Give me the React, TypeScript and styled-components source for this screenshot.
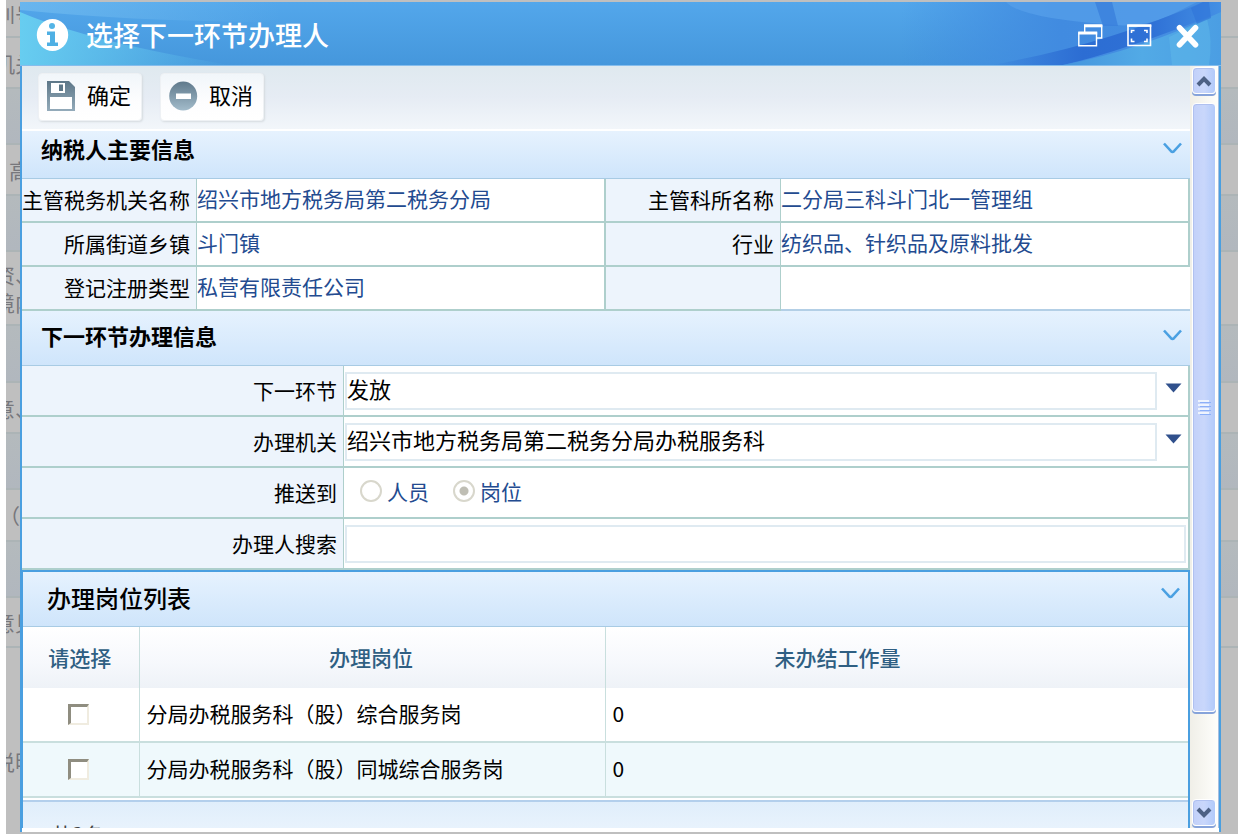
import React from "react";
import styled, { createGlobalStyle, css } from "styled-components";

const GlobalStyle = createGlobalStyle`
  *, *::before, *::after { box-sizing: border-box; }
  body {
    margin: 0;
    background: #fff;
    color: #000;
    font-family: "Noto Sans CJK SC", sans-serif;
    font-size: 21px;
    line-height: 28px;
  }
  button, input, select { font: inherit; color: inherit; margin: 0; }
`;

const line = "#aecfcc";
const headFill = "linear-gradient(#e6f2fe, #cfe5fb)";

/* ---------- page behind the dialog ---------- */

const Page = styled.div`
  display: grid;
  height: 100vh;
  padding: 0 0 6px 6px;
  overflow: hidden;
  > * { grid-area: 1 / 1; min-height: 0; min-width: 0; }
`;

const Backdrop = styled.div`
  display: flex;
  flex-direction: column;
  background: #bfbfbf;
  overflow: hidden;
`;

const BackRow = styled.div<{ $h: number; $tint?: boolean; $first?: boolean; $last?: boolean }>`
  flex: ${(p) => (p.$last ? "1 0 auto" : "none")};
  height: ${(p) => p.$h}px;
  padding: ${(p) => (p.$last ? "40px 0 0" : p.$first ? "0 0 12px" : "0")};
  border-bottom: ${(p) => (p.$last ? "none" : "2px solid #acb4b6")};
  background: ${(p) => (p.$tint ? "linear-gradient(#b4babd, #b1b7be)" : "#bfbfbf")};
  display: flex;
  flex-direction: column;
  justify-content: center;
`;

const BackLabel = styled.span<{ $w?: number }>`
  width: ${(p) => p.$w ?? 30}px;
  display: flex;
  justify-content: flex-end;
  overflow: hidden;
  white-space: nowrap;
  color: #77777c;
`;

/* ---------- dialog ---------- */

const Dialog = styled.section`
  position: relative;
  display: flex;
  flex-direction: column;
  margin: 2px 17px 2px 14px;
  border: solid #4a9fe0;
  border-width: 0 2px;
  background: #fff;
  padding-bottom: 4px;
`;

const TitleBar = styled.header`
  position: relative;
  flex: none;
  display: flex;
  align-items: center;
  height: 64px;
  margin: 0 -2px;
  padding: 4px 22px 0 16px;
  border-bottom: 1px solid #86bdec;
  background: linear-gradient(#53a7eb, #4597dc);
  color: #fff;
  overflow: hidden;
`;

const Swoosh = styled.svg<{ $right?: boolean }>`
  position: absolute;
  top: 0;
  ${(p) => (p.$right ? "right: 0;" : "left: 0;")}
`;

const TitleIcon = styled.svg`
  position: relative;
  flex: none;
`;

const Title = styled.h1`
  position: relative;
  flex: 1;
  margin: 0 0 0 17px;
  padding-bottom: 2px;
  font-size: 27px;
  line-height: 36px;
  font-weight: 500;
`;

const WindowButtons = styled.div`
  position: relative;
  display: flex;
  gap: 24px;
`;

const IconButton = styled.button`
  display: flex;
  padding: 0;
  border: 0;
  background: none;
  cursor: pointer;
`;

const Body = styled.div`
  flex: 1;
  min-height: 0;
  display: flex;
`;

const Content = styled.div`
  flex: 1;
  min-width: 0;
  overflow: hidden;
`;

const Toolbar = styled.div`
  display: flex;
  gap: 18px;
  height: 65px;
  padding: 7px 16px 9px;
  border-bottom: 2px solid #fff;
  background: linear-gradient(#dfe9ef, #e6ecf4 50%, #f2f6fa);
`;

const ToolButton = styled.button`
  display: flex;
  align-items: center;
  gap: 11px;
  height: 48px;
  padding: 0 10px 2px 8px;
  border: 1px solid #eef1f4;
  border-radius: 4px;
  background: linear-gradient(#f1f6fa, #fdfdfe 60%, #fff);
  box-shadow: 1px 1px 2px #d6dbdf;
  font-size: 22px;
  line-height: 28px;
  white-space: nowrap;
  cursor: pointer;
`;

const ButtonText = styled.span`
  padding-bottom: 4px;
`;

const SectionHead = styled.div<{ $first?: boolean; $panel?: boolean }>`
  display: flex;
  align-items: center;
  justify-content: space-between;
  height: ${(p) => (p.$first ? 48 : 55)}px;
  padding: ${(p) => (p.$panel ? "0 8px 2px 24px" : p.$first ? "0 8px 14px 19px" : "0 8px 6px 19px")};
  border-bottom: 1px solid #a8cbe4;
  background: ${headFill};
  ${(p) => p.$panel && css`svg { margin-bottom: 10px; }`}
`;

const SectionTitle = styled.h2<{ $panel?: boolean }>`
  margin: 0;
  font-size: ${(p) => (p.$panel ? 24 : 22)}px;
  line-height: 32px;
  font-weight: ${(p) => (p.$panel ? 500 : 700)};
`;

const FieldTable = styled.table`
  width: 100%;
  table-layout: fixed;
  border-spacing: 0;
`;

const Label = styled.th<{ $h: number }>`
  height: ${(p) => p.$h}px;
  padding: 0 6px 2px 0;
  border: solid ${line};
  border-width: 0 1px 2px 0;
  background: #edf4fc;
  font-weight: 400;
  text-align: right;
  white-space: nowrap;
`;

const Value = styled.td<{ $open?: boolean }>`
  padding: 0 0 5px;
  border: solid ${line};
  border-width: ${(p) => (p.$open ? "0 0 2px" : "0 2px 2px 0")};
  ${(p) => p.$open && "border-color: #b3cfe6;"}
  background: #fff;
  color: #234b90;
  white-space: nowrap;
`;

const Control = styled.td`
  padding: 0 2px 0 1px;
  border: solid ${line};
  border-width: 0 2px 2px 0;
  background: #fff;
`;

const Picker = styled.div`
  display: flex;
  align-items: center;
  gap: 8px;
  padding-right: 4px;
  svg { flex: none; margin-bottom: 6px; }
`;

const fieldBox = css`
  height: 38px;
  border: 2px solid #dfeaf1;
  border-radius: 0;
  background: #fff;
  color: #000;
  font-size: 22px;
  line-height: 28px;
  outline: none;
`;

const Select = styled.select`
  ${fieldBox}
  flex: 1;
  min-width: 0;
  padding: 0 0 7px;
  appearance: none;
`;

const TextInput = styled.input`
  ${fieldBox}
  display: block;
  width: 100%;
  padding: 0 2px;
`;

const Radios = styled.div`
  display: flex;
  gap: 24px;
  padding: 0 0 4px 15px;
`;

const RadioLabel = styled.label`
  display: flex;
  align-items: center;
  gap: 5px;
  color: #234b90;
`;

const Radio = styled.input`
  appearance: none;
  width: 22px;
  height: 22px;
  border: 2px solid #d8d7cc;
  border-radius: 50%;
  background: #fff;
  &:checked { background: radial-gradient(circle, #bfbeb4 0 4px, #fff 5px); }
`;

const Panel = styled.div`
  border: solid #4a9fe0;
  border-width: 2px 2px 0 1px;
`;

const Grid = styled.table`
  width: 100%;
  table-layout: fixed;
  border-spacing: 0;
  margin-bottom: 2px;
`;

const HeadCell = styled.th`
  height: 61px;
  padding: 0 2px 2px 0;
  border-right: 1px solid #c9dfde;
  background: linear-gradient(#fff, #f6f8fc 60%, #eef2f7);
  color: #2f5f83;
  font-weight: 500;
  &:nth-last-child(-n + 2) { border-right: 0; }
`;

const Row = styled.tr`
  &:nth-child(even) { background: #eff9fc; }
`;

const Cell = styled.td<{ $center?: boolean }>`
  height: 55px;
  padding: ${(p) => (p.$center ? "0 4px 0 0" : "0 7px 3px")};
  border: solid #c9dfde;
  border-width: 0 1px 2px 0;
  text-align: ${(p) => (p.$center ? "center" : "left")};
  white-space: nowrap;
  &:nth-last-child(-n + 2) { border-right: 0; }
`;

const CheckBox = styled.input`
  appearance: none;
  display: block;
  width: 21px;
  height: 21px;
  margin: 0 auto;
  border: solid;
  border-width: 3px 2px 2px 3px;
  border-color: #8f8d80 #f0ece0 #f0ece0 #8f8d80;
  background: #fff;
`;

const Pager = styled.div`
  height: 60px;
  padding: 18px 0 0 28px;
  border-top: 2px solid #b3cfec;
  background: linear-gradient(#e0eefb, #f2f8fe);
  color: #444;
`;

/* ---------- scroll bar ---------- */

const ScrollTrack = styled.div`
  flex: none;
  display: flex;
  flex-direction: column;
  width: 29px;
  padding: 1px 2px 0;
  border-right: 1px solid #a7bfe0;
  background: linear-gradient(90deg, #f0efe8, #fefefb);
`;

const scrollPart = css`
  border: 1px solid #fff;
  border-radius: 4px;
  background: linear-gradient(90deg, #c2d0f9, #c9d7fb 50%, #b2cafa);
  box-shadow: inset 1px 1px 0 #b0c1f0, 0 2px 0 #86a3da;
`;

const ScrollButton = styled.button`
  ${scrollPart}
  flex: none;
  display: flex;
  align-items: center;
  justify-content: center;
  height: 27px;
  margin-bottom: 2px;
  padding: 0;
`;

const Thumb = styled.div`
  ${scrollPart}
  flex: 609;
  margin-top: 7px;
  display: flex;
  align-items: center;
  justify-content: center;
`;

const ScrollGap = styled.div`
  flex: 87;
`;

/* ---------- icons ---------- */

const Chevron = () => (
  <svg width="19" height="12" viewBox="0 0 19 12" fill="none" stroke="#4aa0e2" strokeWidth="2.6" aria-hidden="true">
    <path d="M1 1.5 8 9.2Q9.500 10.600 11 9.200L18 1.500" />
  </svg>
);

const Triangle = () => (
  <svg width="17" height="10" viewBox="0 0 17 10" aria-hidden="true">
    <path d="M.5 .5H16.500L8.500 9.500Z" fill="#30508c" />
  </svg>
);

const ScrollArrow = ({ down }: { down?: boolean }) => (
  <svg width="16" height="12" viewBox="0 0 16 12" fill="none" stroke="#4d6185" strokeWidth="4" aria-hidden="true">
    <path d={down ? "M2 2 8 8.200 14 2" : "M2 10 8 3.800 14 10"} />
  </svg>
);

const InfoIcon = () => (
  <TitleIcon width="33" height="34" viewBox="0 0 33 34" aria-hidden="true">
    <ellipse cx="16.5" cy="16" rx="15.700" ry="16" fill="#fff" />
    <circle cx="16" cy="7" r="3" fill="#53b4e6" />
    <path d="M11 12.500H19V23.500H22V27H11V23.500H14V16H11Z" fill="#4fb0e4" />
  </TitleIcon>
);

const SaveIcon = () => (
  <svg width="29" height="30" viewBox="0 0 29 30" aria-hidden="true">
    <defs>
      <linearGradient id="disk" x1="0" y1="0" x2="0" y2="1">
        <stop offset="0" stopColor="#5d7788" />
        <stop offset="1" stopColor="#94abba" />
      </linearGradient>
    </defs>
    <path d="M0 0H22L28 6V30H0Z" fill="url(#disk)" />
    <path d="M4 2H18V12H4Z" fill="#fff" />
    <path d="M12 3.500H16V10H12Z" fill="#5d7788" />
    <path d="M3 16H25V28H3Z" fill="#fff" />
  </svg>
);

const MinusIcon = () => (
  <svg width="29" height="30" viewBox="0 0 29 30" aria-hidden="true">
    <defs>
      <linearGradient id="disc" x1="0" y1="0" x2="0" y2="1">
        <stop offset="0" stopColor="#5f798b" />
        <stop offset="1" stopColor="#a3bccb" />
      </linearGradient>
    </defs>
    <ellipse cx="14.200" cy="15" rx="14" ry="14.600" fill="url(#disc)" />
    <path d="M7 12.500H22V18H7Z" fill="#fff" />
  </svg>
);

const RestoreIcon = () => (
  <svg width="25" height="23" viewBox="0 0 25 23" fill="none" stroke="#fff" aria-hidden="true">
    <path d="M6.700 8V1.500H23.700V14H18.500" strokeWidth="1.400" />
    <path d="M6 1.800H24.300" strokeWidth="3" />
    <path d="M.8 9H18.500V21.700H.8Z" strokeWidth="1.400" />
    <path d="M.2 9H19.200" strokeWidth="3" />
  </svg>
);

const MaximizeIcon = () => (
  <svg width="25" height="23" viewBox="0 0 25 23" fill="none" stroke="#fff" aria-hidden="true">
    <path d="M1 1.500H23.500V21.500H1Z" strokeWidth="1.600" />
    <path d="M.2 1.600H24.300" strokeWidth="2.600" />
    <path d="M4.500 9V6.500H7.500M17 6.500H20V9M20 14.500V17.500H17M7.500 17.500H4.500V14.500" strokeWidth="1.600" />
  </svg>
);

const CloseIcon = () => (
  <svg width="23" height="24" viewBox="0 0 23 24" fill="none" stroke="#fff" strokeWidth="5.600" aria-hidden="true">
    <path d="M3.500 3.800 19.500 20.700M19.500 3.800 3.500 20.700" strokeLinecap="round" />
  </svg>
);

const Grip = () => (
  <svg width="13" height="15" viewBox="0 0 13 15" aria-hidden="true">
    {[0, 4, 8, 12].map((y) => (
      <g key={y}>
        <rect x="0" y={y} width="11" height="2" fill="#eef4fe" />
        <rect x="2" y={y + 2} width="11" height="1" fill="#8cb0f8" />
      </g>
    ))}
  </svg>
);

const LeftSwoosh = () => (
  <Swoosh width="260" height="63" viewBox="0 0 260 63" aria-hidden="true">
    <defs>
      <linearGradient id="glow" x1="0" y1="0" x2="1" y2="0">
        <stop offset="0" stopColor="#67cdf0" />
        <stop offset="1" stopColor="#67cdf0" stopOpacity="0" />
      </linearGradient>
      <linearGradient id="sheen" x1="0" y1="0" x2="1" y2="0">
        <stop offset="0" stopColor="#72bcf0" />
        <stop offset="1" stopColor="#72bcf0" stopOpacity="0" />
      </linearGradient>
    </defs>
    <path d="M0 0H260V20Q120 20 0 8Z" fill="url(#sheen)" opacity=".7" />
    <path d="M0 10Q70 40 210 63H0Z" fill="url(#glow)" />
  </Swoosh>
);

const RightSwoosh = () => (
  <Swoosh $right width="320" height="63" viewBox="0 0 320 63" aria-hidden="true">
    <defs>
      <linearGradient id="shade" x1="0" y1="0" x2="1" y2="0">
        <stop offset="0" stopColor="#3f8ae0" stopOpacity="0" />
        <stop offset=".5" stopColor="#418be0" />
        <stop offset="1" stopColor="#468fe2" />
      </linearGradient>
      <linearGradient id="band" x1="0" y1="0" x2="1" y2="0">
        <stop offset="0" stopColor="#2c6dd3" stopOpacity="0" />
        <stop offset=".4" stopColor="#2c6dd3" />
        <stop offset=".7" stopColor="#2f71d6" />
        <stop offset="1" stopColor="#4490e4" />
      </linearGradient>
      <linearGradient id="lower" x1="0" y1="0" x2="1" y2="0">
        <stop offset="0" stopColor="#4595dd" />
        <stop offset=".5" stopColor="#52aae6" />
        <stop offset="1" stopColor="#4b9ee3" />
      </linearGradient>
    </defs>
    <path d="M0 0H320V63H0Z" fill="url(#shade)" />
    <path d="M105 0Q120 16 204 22Q240 27 268 14L296 0Z" fill="#559fea" opacity=".75" />
    <path d="M194 0H211L217 24 202 24Z" fill="#3a80dc" opacity=".8" />
    <path d="M90 63Q200 44 302 0H320V10Q220 50 162 63Z" fill="url(#band)" />
    <path d="M162 63Q240 48 320 10V63Z" fill="url(#lower)" />
    <path d="M268 35 306 17Q312 38 308 63H271Z" fill="#65bdec" opacity=".4" />
    <path d="M290 6 302 0H308L310 16 296 22Z" fill="#2f73d8" opacity=".6" />
  </Swoosh>
);

/* ---------- data ---------- */

const backRows: { h: number; tint?: boolean; text?: string[]; w?: number }[] = [
  { h: 38, text: ["别号"] },
  { h: 51, text: ["机关"] },
  { h: 56, tint: true },
  { h: 51, text: ["高"], w: 24 },
  { h: 56, tint: true },
  { h: 74, text: ["资、", "境内"] },
  { h: 57, tint: true },
  { h: 51, text: ["意、"] },
  { h: 56, tint: true },
  { h: 52, text: ["（"], w: 14 },
  { h: 56, tint: true },
  { h: 50, text: ["意见"] },
  { h: 186, text: ["说明"] },
];

const taxpayer = [
  ["主管税务机关名称", "绍兴市地方税务局第二税务分局", "主管科所名称", "二分局三科斗门北一管理组"],
  ["所属街道乡镇", "斗门镇", "行业", "纺织品、针织品及原料批发"],
  ["登记注册类型", "私营有限责任公司", "", ""],
];

const posts = [
  { name: "分局办税服务科（股）综合服务岗", pending: 0 },
  { name: "分局办税服务科（股）同城综合服务岗", pending: 0 },
];

export default function App() {
  return (
    <>
      <GlobalStyle />
      <Page>
        <Backdrop aria-hidden="true">
          {backRows.map((r, i) => (
            <BackRow key={i} $h={r.h} $tint={r.tint} $first={i === 0} $last={i === backRows.length - 1}>
              {r.text?.map((t) => <BackLabel key={t} $w={r.w}>{t}</BackLabel>)}
            </BackRow>
          ))}
        </Backdrop>

        <Dialog role="dialog" aria-labelledby="dialog-title">
          <TitleBar>
            <LeftSwoosh />
            <RightSwoosh />
            <InfoIcon />
            <Title id="dialog-title">选择下一环节办理人</Title>
            <WindowButtons>
              <IconButton aria-label="还原"><RestoreIcon /></IconButton>
              <IconButton aria-label="最大化"><MaximizeIcon /></IconButton>
              <IconButton aria-label="关闭"><CloseIcon /></IconButton>
            </WindowButtons>
          </TitleBar>

          <Body>
            <Content>
              <Toolbar>
                <ToolButton><SaveIcon /><ButtonText>确定</ButtonText></ToolButton>
                <ToolButton><MinusIcon /><ButtonText>取消</ButtonText></ToolButton>
              </Toolbar>

              <SectionHead $first>
                <SectionTitle>纳税人主要信息</SectionTitle>
                <Chevron />
              </SectionHead>
              <FieldTable>
                <colgroup>
                  <col style={{ width: 175 }} />
                  <col />
                  <col style={{ width: 175 }} />
                  <col />
                </colgroup>
                <tbody>
                  {taxpayer.map(([l1, v1, l2, v2]) => (
                    <tr key={l1}>
                      <Label $h={44} scope="row">{l1}</Label>
                      <Value>{v1}</Value>
                      <Label $h={44} scope="row">{l2}</Label>
                      <Value $open={!l2}>{v2}</Value>
                    </tr>
                  ))}
                </tbody>
              </FieldTable>

              <SectionHead>
                <SectionTitle>下一环节办理信息</SectionTitle>
                <Chevron />
              </SectionHead>
              <FieldTable>
                <colgroup>
                  <col style={{ width: 322 }} />
                  <col />
                </colgroup>
                <tbody>
                  <tr>
                    <Label $h={51} scope="row"><label htmlFor="next">下一环节</label></Label>
                    <Control>
                      <Picker>
                        <Select id="next"><option>发放</option></Select>
                        <Triangle />
                      </Picker>
                    </Control>
                  </tr>
                  <tr>
                    <Label $h={51} scope="row"><label htmlFor="office">办理机关</label></Label>
                    <Control>
                      <Picker>
                        <Select id="office"><option>绍兴市地方税务局第二税务分局办税服务科</option></Select>
                        <Triangle />
                      </Picker>
                    </Control>
                  </tr>
                  <tr>
                    <Label $h={51} scope="row">推送到</Label>
                    <Control>
                      <Radios>
                        <RadioLabel><Radio type="radio" name="target" disabled />人员</RadioLabel>
                        <RadioLabel><Radio type="radio" name="target" defaultChecked disabled />岗位</RadioLabel>
                      </Radios>
                    </Control>
                  </tr>
                  <tr>
                    <Label $h={51} scope="row"><label htmlFor="search">办理人搜索</label></Label>
                    <Control><TextInput id="search" type="text" /></Control>
                  </tr>
                </tbody>
              </FieldTable>

              <Panel>
                <SectionHead $panel>
                  <SectionTitle $panel>办理岗位列表</SectionTitle>
                  <Chevron />
                </SectionHead>
                <Grid>
                  <colgroup>
                    <col style={{ width: "10%" }} />
                    <col style={{ width: "40%" }} />
                    <col style={{ width: "40%" }} />
                    <col />
                  </colgroup>
                  <thead>
                    <tr>
                      <HeadCell scope="col">请选择</HeadCell>
                      <HeadCell scope="col">办理岗位</HeadCell>
                      <HeadCell scope="col">未办结工作量</HeadCell>
                      <HeadCell as="td" />
                    </tr>
                  </thead>
                  <tbody>
                    {posts.map((p) => (
                      <Row key={p.name}>
                        <Cell $center><CheckBox type="checkbox" aria-label={p.name} /></Cell>
                        <Cell>{p.name}</Cell>
                        <Cell>{p.pending}</Cell>
                        <Cell />
                      </Row>
                    ))}
                  </tbody>
                </Grid>
                <Pager>共2条</Pager>
              </Panel>
            </Content>

            <ScrollTrack>
              <ScrollButton aria-label="向上滚动"><ScrollArrow /></ScrollButton>
              <Thumb><Grip /></Thumb>
              <ScrollGap />
              <ScrollButton aria-label="向下滚动"><ScrollArrow down /></ScrollButton>
            </ScrollTrack>
          </Body>
        </Dialog>
      </Page>
    </>
  );
}
